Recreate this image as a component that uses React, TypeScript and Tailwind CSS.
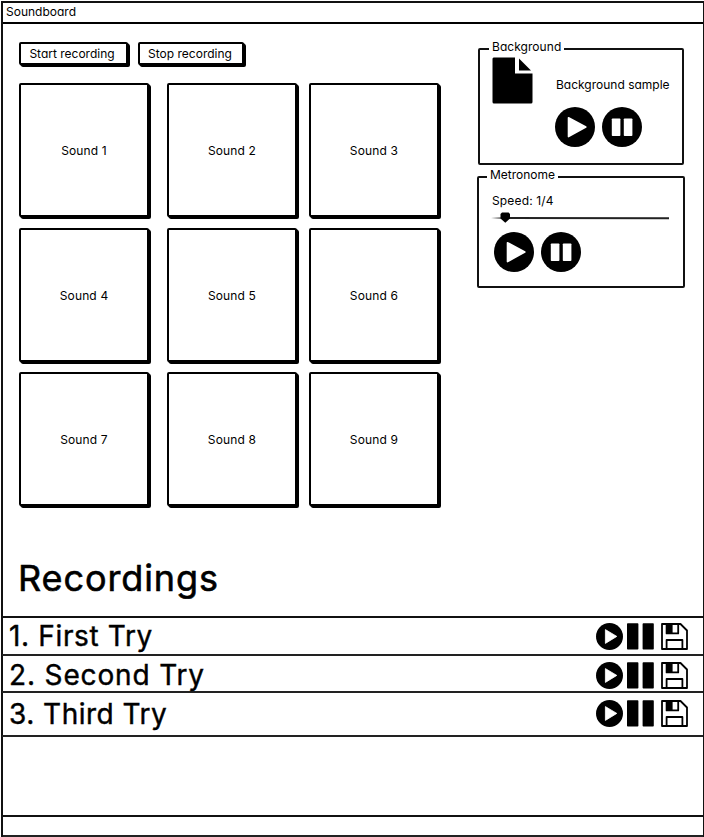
import type { ReactNode } from "react";

function PlayCircle({ className }: { className: string }) {
  return (
    <svg viewBox="0 0 40 40" className={className}>
      <circle cx="20" cy="20" r="20" fill="#000" />
      <path d="M13.5 10.7 L30.8 20 L13.5 29.6 Z" fill="#fff" stroke="#fff" strokeWidth="1.6" strokeLinejoin="round" />
    </svg>
  );
}

function PauseCircle({ className }: { className: string }) {
  return (
    <svg viewBox="0 0 40 40" className={className}>
      <circle cx="20" cy="20" r="20" fill="#000" />
      <rect x="9.8" y="11.5" width="8.6" height="17.5" rx="0.8" fill="#fff" />
      <rect x="21.8" y="11.5" width="8.6" height="17.5" rx="0.8" fill="#fff" />
    </svg>
  );
}

function PlaySmall() {
  return (
    <svg viewBox="0 0 27 27" className="size-[27px]">
      <circle cx="13.5" cy="13.5" r="13.5" fill="#000" />
      <path d="M9.4 6.6 L20.8 13.4 L9.4 20.4 Z" fill="#fff" stroke="#fff" strokeWidth="0.8" strokeLinejoin="round" />
    </svg>
  );
}

function PauseBars() {
  return (
    <svg viewBox="0 0 27 27" className="ml-[4px] size-[27px]">
      <rect x="0" y="0.3" width="11.4" height="26.2" rx="0.8" />
      <rect x="15.6" y="0.3" width="11.2" height="26.2" rx="0.8" />
    </svg>
  );
}

function Floppy() {
  return (
    <svg viewBox="0 0 27 27" className="ml-[7px] size-[27px]" fill="none" stroke="#000" strokeWidth="1.8" strokeLinejoin="round">
      <path d="M1 1 H19.5 L26 7.5 V26 H1 Z" />
      <path d="M5.6 1 V10.4 H17.2 V1" />
      <rect x="5.6" y="1" width="6" height="9.4" fill="#000" stroke="none" />
      <path d="M5.6 26 V17 H21.4 V26" />
    </svg>
  );
}

function Pad({ label }: { label: string }) {
  return (
    <button className="flex h-[134px] w-[130px] items-center justify-center rounded-[2px] border-2 border-black bg-white pt-[2px] shadow-[1px_1px_0_#000,2px_2px_0_#000]">
      <span className="text-[12px] leading-4 tracking-[0.15px]">{label}</span>
    </button>
  );
}

function RecordButton({ children, className }: { children: ReactNode; className: string }) {
  return (
    <button
      className={
        "flex h-[23px] items-center justify-center whitespace-nowrap rounded-[2px] border-2 border-black bg-white pt-px text-[12px] leading-4 shadow-[1px_1px_0_#000,2px_2px_0_#000] " +
        className
      }
    >
      {children}
    </button>
  );
}

function Recording({
  title,
  className,
  textClass,
  iconClass,
}: {
  title: string;
  className: string;
  textClass: string;
  iconClass: string;
}) {
  return (
    <li className={"flex justify-between border-b-2 border-[#222] pl-[7px] pr-[15px] " + className}>
      <span className={"whitespace-nowrap text-[28px] leading-[34px] [-webkit-text-stroke:0.4px_#000] " + textClass}>
        {title}
      </span>
      <span className={"flex " + iconClass}>
        <PlaySmall />
        <PauseBars />
        <Floppy />
      </span>
    </li>
  );
}

const pads = ["Sound 1", "Sound 2", "Sound 3", "Sound 4", "Sound 5", "Sound 6", "Sound 7", "Sound 8", "Sound 9"];

export default function App() {
  return (
    <div className="h-[837px] w-[704px] overflow-hidden bg-white pl-px pt-px font-['Inter','Liberation_Sans',sans-serif] text-black [font-feature-settings:'cv11']">
      <div className="flex h-[836px] flex-col border-l-2 border-r border-t-2 border-[#111]">
        <header className="h-[21px] shrink-0 border-b-2 border-black pl-[3px] text-[12px] leading-[18px]">
          Soundboard
        </header>

        <main className="flex h-[592px] shrink-0">
          <section className="w-[457px] pl-[16px] pt-[18px]">
            <div className="flex gap-[10px]">
              <RecordButton className="w-[109px] pr-[3px]">Start recording</RecordButton>
              <RecordButton className="w-[106px] pr-[2px]">Stop recording</RecordButton>
            </div>
            <div className="mt-[18px] grid grid-cols-[148px_142px_130px] gap-y-[10.5px]">
              {pads.map((label) => (
                <Pad key={label} label={label} />
              ))}
            </div>
            <h1 className="-ml-px mt-[50px] text-[36px] leading-[44px] tracking-[0.9px] [-webkit-text-stroke:0.6px_#000]">
              Recordings
            </h1>
          </section>

          <aside className="w-[224px] pl-[17px] pt-[16px]">
            <fieldset className="ml-px h-[125px] w-[206px] rounded-[2px] border-2 border-[#111] pl-[12px]">
              <legend className="-ml-[3px] px-[3px] pb-[4px] text-[12px] leading-[14px] tracking-[0.05px]">
                Background
              </legend>
              <div className="flex">
                <svg viewBox="0 0 41 47" className="-mt-px h-[47px] w-[41px] shrink-0">
                  <path d="M1.5 0.5 H23 V16.5 H40.5 V45 Q40.5 46.5 39 46.5 H2 Q0.5 46.5 0.5 45 V1.5 Z" />
                  <path d="M27 1.5 L39 13.5 H27 Z" />
                </svg>
                <div className="ml-[23px] pt-[19px]">
                  <p className="whitespace-nowrap text-[12px] leading-4">Background sample</p>
                  <div className="-ml-px mt-[14px] flex gap-[7px]">
                    <PlayCircle className="size-10" />
                    <PauseCircle className="size-10" />
                  </div>
                </div>
              </div>
            </fieldset>
            <fieldset className="mt-[3px] h-[120px] w-[208px] rounded-[2px] border-2 border-[#111] pl-[11px]">
              <legend className="-ml-[3px] px-[3px] pb-[4px] text-[12px] leading-[14px]">Metronome</legend>
              <p className="mt-[7px] pl-[2px] text-[12px] leading-4 tracking-[0.15px]">Speed: 1/4</p>
              <svg viewBox="0 0 178 12" className="ml-px mt-[3px] h-[12px] w-[178px]">
                <path d="M0 6 L18 5 L178 5.2 V7.2 L16 7 Z" fill="#222" />
                <path d="M11 0.6 H17.6 L19 2 V6.5 L14.3 10.8 L9.5 6.5 V2 Z" />
              </svg>
              <div className="ml-[4px] mt-[8px] flex gap-[7px]">
                <PlayCircle className="size-10" />
                <PauseCircle className="size-10" />
              </div>
            </fieldset>
          </aside>
        </main>

        <ul className="h-[201px] shrink-0 border-y-2 border-[#111]">
          <Recording title="1. First Try" className="-ml-px h-[38px]" textClass="pt-px tracking-[0.65px]" iconClass="pt-[5px]" />
          <Recording title="2. Second Try" className="-ml-px h-[37px]" textClass="pt-[2px] tracking-[0.85px]" iconClass="pt-[6px]" />
          <Recording title="3. Third Try" className="-ml-px h-[44px]" textClass="pt-[4px] tracking-[0.5px]" iconClass="pt-[7px]" />
        </ul>
        <footer className="h-[20px] shrink-0 border-b-2 border-[#222]" />
      </div>
    </div>
  );
}
